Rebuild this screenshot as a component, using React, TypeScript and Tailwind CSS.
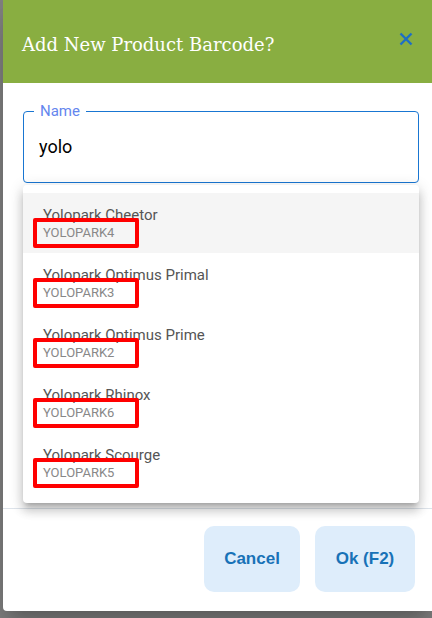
import React from "react";

const options = [
  { name: "Yolopark Cheetor", code: "YOLOPARK4" },
  { name: "Yolopark Optimus Primal", code: "YOLOPARK3" },
  { name: "Yolopark Optimus Prime", code: "YOLOPARK2" },
  { name: "Yolopark Rhinox", code: "YOLOPARK6" },
  { name: "Yolopark Scourge", code: "YOLOPARK5" },
];

function CloseIcon() {
  return (
    <svg width="14" height="14" viewBox="0 0 14 14" className="text-[#1f6fc4]">
      <path d="M1.5 1.5 L12.5 12.5 M12.5 1.5 L1.5 12.5" stroke="currentColor" strokeWidth="2.4" fill="none" />
    </svg>
  );
}

function OptionRow({ name, code, active }: { name: string; code: string; active: boolean }) {
  return (
    <li className={`relative flex h-[60px] flex-col justify-center px-5 ${active ? "bg-[#f5f5f5]" : ""}`}>
      <span className="text-[15px] leading-5 text-[#555]">{name}</span>
      <span className="text-[13px] leading-4 text-[#888]">{code}</span>
      {/* highlight box drawn over the code */}
      <span className="absolute left-[10px] top-[25px] h-[30px] w-[106px] rounded-[2px] border-[4px] border-[#ff0000]" />
    </li>
  );
}

export default function App() {
  return (
    <div className="flex h-[618px] w-[432px] overflow-hidden bg-[#7f7f7f] pl-[3px] font-['Roboto',sans-serif]">
      <div className="relative flex h-[611px] w-[429px] flex-col rounded-bl-[4px] bg-white shadow-[0_11px_15px_-7px_rgba(0,0,0,0.2),0_24px_38px_3px_rgba(0,0,0,0.14)]">
        <div className="flex h-[83px] shrink-0 items-center justify-between bg-[#89ae41] pl-[19px] pr-[19px]">
          <h2 className="mt-[5px] font-['DejaVu_Serif',serif] text-[18px] text-white">Add New Product Barcode?</h2>
          <button className="-mt-[6px] flex items-center">
            <CloseIcon />
          </button>
        </div>

        <div className="relative flex-1 px-5 pt-[28px]">
          <div className="relative h-[72px] w-[396px] rounded-[4px] border border-[#1976d2]">
            <span className="absolute -top-[11px] left-[10px] bg-white px-[6px] text-[15px] leading-5 text-[#6486ee]">
              Name
            </span>
            <div className="pl-[15px] pt-[23px] text-[18px] leading-6 text-black">yolo</div>
          </div>

          <ul className="absolute left-5 top-[102px] z-10 w-[396px] rounded-[4px] bg-white pb-[10px] pt-2 shadow-[0_5px_5px_-3px_rgba(0,0,0,0.2),0_8px_10px_1px_rgba(0,0,0,0.14),0_3px_14px_2px_rgba(0,0,0,0.12)]">
            {options.map((o, i) => (
              <OptionRow key={o.code} name={o.name} code={o.code} active={i === 0} />
            ))}
          </ul>
        </div>

        <div className="flex h-[103px] shrink-0 items-start justify-end gap-[15px] border-t border-[#dde3ea] pr-[17px] pt-[17px] font-['Liberation_Sans',Arial,sans-serif]">
          <button className="h-[66px] w-[96px] rounded-[10px] bg-[#deedfb] text-[17px] font-bold text-[#1872b7]">
            Cancel
          </button>
          <button className="h-[66px] w-[100px] rounded-[10px] bg-[#deedfb] text-[17px] font-bold text-[#1872b7]">
            Ok (F2)
          </button>
        </div>
      </div>
    </div>
  );
}
